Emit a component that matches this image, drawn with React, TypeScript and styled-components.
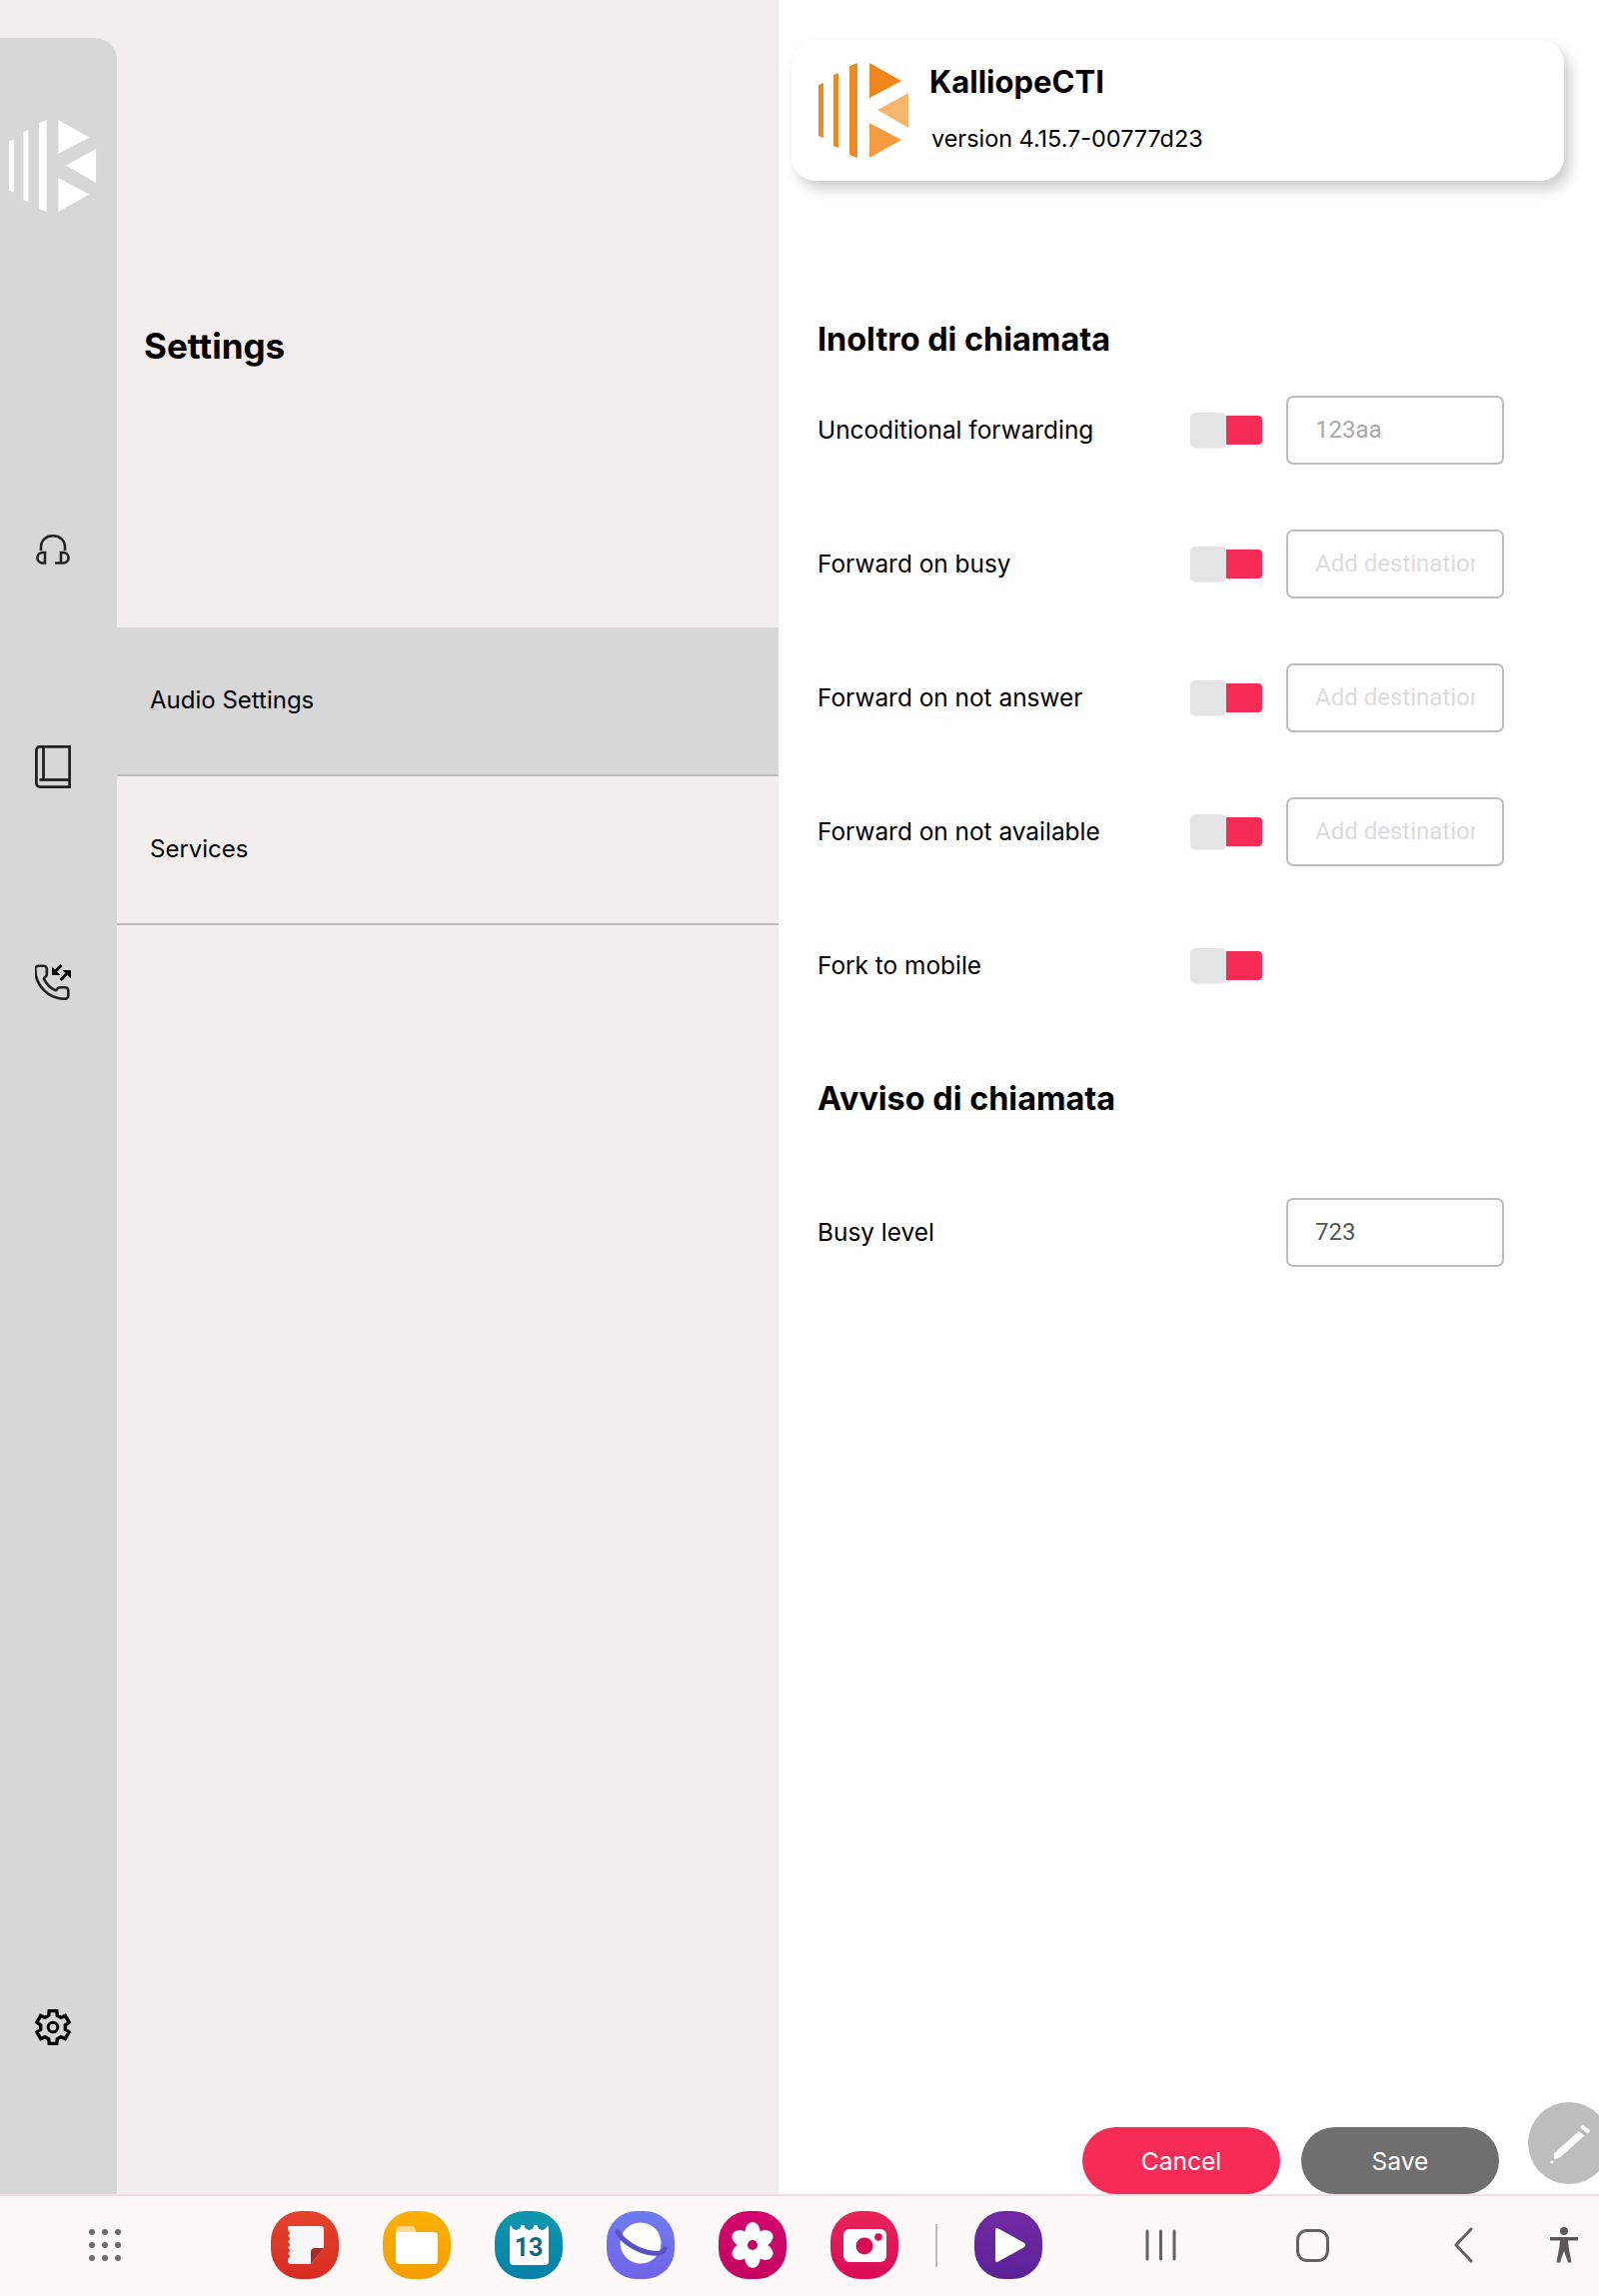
import styled, { createGlobalStyle } from 'styled-components';

const GlobalStyle = createGlobalStyle`
  html, body { margin: 0; padding: 0; background: #fff; }
  * { box-sizing: border-box; }
  body { font-family: "Inter", "Open Sans", sans-serif; color: #000; }
`;

const forwards = [
  { label: 'Uncoditional forwarding', value: '123aa' },
  { label: 'Forward on busy' },
  { label: 'Forward on not answer' },
  { label: 'Forward on not available' },
];

// six flat teeth, one pointing straight up
const gearPoints = Array.from({ length: 6 })
  .flatMap((_, k) => {
    const a = k * 60 - 90;
    return [[12.5, a - 20], [16.8, a - 13], [16.8, a + 13], [12.5, a + 20]];
  })
  .map(([r, deg]) => {
    const rad = (deg * Math.PI) / 180;
    return `${(19 + r * Math.cos(rad)).toFixed(2)},${(19 + r * Math.sin(rad)).toFixed(2)}`;
  })
  .join(' ');

const KLogo = ({ light }: { light?: boolean }) => {
  const bars = light ? '#fff' : '#ee8a26';
  return (
    <svg width={light ? 88 : 91} height={light ? 92 : 95} viewBox="0 0 91 95">
      <polygon fill={bars} points="0,22 5,20 5,75 0,73" />
      <polygon fill={bars} points="15,12 20,10 20,85 15,83" />
      <polygon fill={bars} points="31,3 39,0 39,95 31,92" />
      <polygon fill={light ? '#fff' : '#ef861c'} points="51,0 83,18 51,35" />
      <polygon fill={light ? '#fff' : '#f7b66c'} points="90,30 59,47 90,65" />
      <polygon fill={light ? '#fff' : '#f49c3f'} points="51,60 83,77 51,95" />
    </svg>
  );
};

const HeadsetIcon = () => (
  <svg width="36" height="30" viewBox="0 0 36 30" fill="none" stroke="#222" strokeWidth="2.6">
    <path d="M6 16V13C6 5.5 11 1.3 18 1.3S30 5.5 30 13V16" />
    <path d="M10 18V28.5H7A5.3 5.3 0 0 1 7 18Z" />
    <path d="M20 28.5H29A5.3 5.3 0 0 0 29 18H26V28.5" />
  </svg>
);

const BookIcon = () => (
  <svg width="36" height="43" viewBox="0 0 36 43" fill="none" stroke="#222" strokeWidth="2.8">
    <path d="M5 1.4H34.6V41.6H5A3.6 3.6 0 0 1 1.4 38V5A3.6 3.6 0 0 1 5 1.4Z" />
    <path d="M8.5 1.4V34.5" />
    <path d="M4.5 34.5H34.6" />
  </svg>
);

const PhoneSwapIcon = () => (
  <svg width="36" height="36" viewBox="0 0 36 36" fill="none">
    <g transform="translate(-3 -1.5) scale(1.65)" stroke="#222" strokeWidth="1.6" strokeLinecap="round" strokeLinejoin="round">
      <path d="M13.832 16.568a1 1 0 0 0 1.213-.303l.355-.465A2 2 0 0 1 17 15h3a2 2 0 0 1 2 2v3a2 2 0 0 1-2 2A18 18 0 0 1 2 4a2 2 0 0 1 2-2h3a2 2 0 0 1 2 2v3a2 2 0 0 1-.8 1.6l-.468.351a1 1 0 0 0-.292 1.233 14 14 0 0 0 6.392 6.384" />
    </g>
    <path d="M26.5 1L20 7.5" stroke="#000" strokeWidth="3" />
    <polygon fill="#000" points="17,2.5 17,11 25.5,11 22.5,8 20,8 20,5.5" />
    <path d="M25.5 16L32.5 9" stroke="#000" strokeWidth="3" />
    <polygon fill="#000" points="36,6 27.5,6 30.5,9 33,9 33,11.5 36,14.5" />
  </svg>
);

const GearIcon = () => (
  <svg width="38" height="38" viewBox="0 0 38 38" fill="none" stroke="#000" strokeWidth="3.4" strokeLinejoin="miter">
    <polygon points={gearPoints} />
    <circle cx="19" cy="19" r="4.8" strokeWidth="3" />
  </svg>
);

function App() {
  return (
    <Page>
      <GlobalStyle />
      <Main>
        <Rail>
          <RailLogo><KLogo light /></RailLogo>
          <RailNav>
            <RailItem $h={214}><HeadsetIcon /></RailItem>
            <RailItem $h={220}><BookIcon /></RailItem>
            <RailItem $h={212}><PhoneSwapIcon /></RailItem>
          </RailNav>
          <RailFooter><GearIcon /></RailFooter>
        </Rail>

        <MenuPane>
          <PaneTitle>Settings</PaneTitle>
          <MenuItem $active>Audio Settings</MenuItem>
          <MenuItem>Services</MenuItem>
        </MenuPane>

        <DetailPane>
          <AboutCard>
            <KLogo />
            <AboutText>
              <AppName>KalliopeCTI</AppName>
              <AppVersion>version 4.15.7-00777d23</AppVersion>
            </AboutText>
          </AboutCard>

          <SectionTitle>Inoltro di chiamata</SectionTitle>
          {forwards.map(f => (
            <Row key={f.label}>
              <RowLabel>{f.label}</RowLabel>
              <Toggle><Thumb /><Track /></Toggle>
              <Field readOnly defaultValue={f.value} placeholder="Add destination" />
            </Row>
          ))}
          <Row>
            <RowLabel>Fork to mobile</RowLabel>
            <Toggle><Thumb /><Track /></Toggle>
          </Row>

          <WaitTitle>Avviso di chiamata</WaitTitle>
          <Row>
            <RowLabel>Busy level</RowLabel>
            <ToggleGap />
            <Field $dark readOnly defaultValue="723" />
          </Row>

          <Actions>
            <ActionButton $color="#f72c56">Cancel</ActionButton>
            <ActionButton $color="#6f6f6f">Save</ActionButton>
          </Actions>
          <EditFab>
            <svg width="82" height="82" viewBox="0 0 82 82" fill="#fff">
              <polygon points="50.7,29 56.4,33.4 32.4,55 26,57.5 25.7,51.7" />
              <circle cx="24" cy="60" r="1.6" />
              <path d="M54.5 25L59.8 29" stroke="#fff" strokeWidth="4" strokeLinecap="round" />
            </svg>
          </EditFab>
        </DetailPane>
      </Main>

      <BottomBar>
        <Launcher>
          {Array.from({ length: 9 }).map((_, i) => <LauncherDot key={i} />)}
        </Launcher>
        <Apps>
          <AppIcon $bg="linear-gradient(#e5432a,#d82b22)">
            <svg width="38" height="38" viewBox="0 0 38 38">
              <path fill="#f6f6f8" d="M3 0H35Q38 0 38 3V22L25 38H5Q2 38 2 35V33Q6 30.500 2 27.500Q6 25 2 21.500Q6 19 2 15.500Q6 13 2 9.500Q6 7 2 4V2Q2 0 3 0Z" />
              <path fill="#a92a22" d="M25 38V26Q25 22 29 22H38Z" />
            </svg>
          </AppIcon>
          <AppIcon $bg="linear-gradient(#fbb200,#f69d00)">
            <svg width="42" height="38" viewBox="0 0 42 38">
              <path fill="#ffd98f" d="M0 5Q0 0 5 0H15Q20 0 20 6V10H0Z" />
              <rect fill="#fff" y="6" width="42" height="32" rx="4" />
            </svg>
          </AppIcon>
          <AppIcon $bg="linear-gradient(#0f97ac,#0581a8)">
            <CalendarSheet>13</CalendarSheet>
          </AppIcon>
          <AppIcon $bg="linear-gradient(#6f7cf0,#7263ea)">
            <svg width="68" height="68" viewBox="0 0 68 68" fill="none">
              <circle fill="#fff" cx="34" cy="32" r="20.500" />
              <path stroke="#5a50c8" strokeWidth="5" strokeLinecap="round" d="M11 21C16 30 30 40 45 42C52 43 57 42 58 38" />
            </svg>
          </AppIcon>
          <AppIcon $bg="linear-gradient(#d4056f,#c4045f)">
            <svg width="42" height="46" viewBox="0 0 46 50" fill="#fff" preserveAspectRatio="none">
              <ellipse cx="23" cy="11.500" rx="8.500" ry="11.500" />
              <ellipse cx="23" cy="38.500" rx="8.500" ry="11.500" />
              <ellipse cx="11" cy="18" rx="11" ry="8.500" transform="rotate(30 11 18)" />
              <ellipse cx="35" cy="18" rx="11" ry="8.500" transform="rotate(-30 35 18)" />
              <ellipse cx="11" cy="32" rx="11" ry="8.500" transform="rotate(-30 11 32)" />
              <ellipse cx="35" cy="32" rx="11" ry="8.500" transform="rotate(30 35 32)" />
              <circle cx="23" cy="25" r="5.500" fill="#c4045f" />
            </svg>
          </AppIcon>
          <AppIcon $bg="linear-gradient(#e8245a,#d90a58)">
            <svg width="43" height="33" viewBox="0 0 43 33">
              <rect fill="#fff" width="43" height="33" rx="6" />
              <circle fill="#d90a58" cx="21" cy="17" r="8.500" />
              <circle fill="#d90a58" cx="35" cy="8" r="3.800" />
            </svg>
          </AppIcon>
          <DockDivider />
          <AppIcon $bg="linear-gradient(#7229a4,#5a2298)">
            <svg width="36" height="36" viewBox="0 0 36 36">
              <path fill="#fff" d="M5 3Q5 0 8 1.500L34 16Q36 18 34 20L8 34.500Q5 36 5 33Z" />
            </svg>
          </AppIcon>
        </Apps>
        <SystemNav>
          <NavKey $ml={0}>
            <svg width="31" height="32" viewBox="0 0 31 32" stroke="#636363" strokeWidth="3" strokeLinecap="round">
              <path d="M2 2V30M15.500 2V30M29 2V30" />
            </svg>
          </NavKey>
          <NavKey $ml={120}><HomeKey /></NavKey>
          <NavKey $ml={124}>
            <svg width="20" height="36" viewBox="0 0 20 36" fill="none" stroke="#636363" strokeWidth="3" strokeLinecap="round" strokeLinejoin="round">
              <path d="M18 2L3 18L18 34" />
            </svg>
          </NavKey>
          <NavKey $ml={76}>
            <svg width="30" height="36" viewBox="0 0 30 36" fill="#595959">
              <circle cx="15" cy="4" r="4" />
              <path d="M1 10H29V13.500H19L20 22L22.500 35.500H19L15 24L11 35.500H7.500L10 22L11 13.500H1Z" />
            </svg>
          </NavKey>
        </SystemNav>
      </BottomBar>
    </Page>
  );
}

export default App;

const Page = styled.div`
  width: 1600px;
  height: 2298px;
  display: flex;
  flex-direction: column;
  overflow: hidden;
`;

const Main = styled.div`
  flex: 1;
  display: flex;
  min-height: 0;
  background: #f1eeed;
`;

const Rail = styled.aside`
  width: 117px;
  margin-top: 38px;
  padding-right: 11px;
  background: #d7d7d7;
  border-top-right-radius: 22px;
  display: flex;
  flex-direction: column;
  align-items: center;
`;

const RailLogo = styled.div`
  margin: 82px 0 0 0;
  height: 92px;
`;

const RailNav = styled.nav`
  margin-top: 231px;
  display: flex;
  flex-direction: column;
  align-items: center;
`;

const RailItem = styled.div<{ $h: number }>`
  height: ${p => p.$h}px;
  display: flex;
  align-items: center;
  justify-content: center;
`;

const RailFooter = styled.div`
  margin-top: auto;
  margin-bottom: 148px;
  display: flex;
`;

const MenuPane = styled.section`
  width: 662px;
  display: flex;
  flex-direction: column;
`;

const PaneTitle = styled.h1`
  margin: 326px 0 262px;
  padding-left: 27px;
  font-size: 35px;
  line-height: 40px;
  font-weight: 700;
`;

const MenuItem = styled.div<{ $active?: boolean }>`
  height: 149px;
  padding: 0 0 3px 33px;
  display: flex;
  align-items: center;
  font-size: 24px;
  background: ${p => (p.$active ? '#d7d7d7' : 'transparent')};
  border-bottom: 2px solid #bcbcbc;
`;

const DetailPane = styled.section`
  position: relative;
  flex: 1;
  background: #fff;
  padding-top: 40px;
  display: flex;
  flex-direction: column;
`;

const AboutCard = styled.div`
  margin-left: 13px;
  width: 773px;
  height: 141px;
  padding-left: 27px;
  display: flex;
  align-items: center;
  gap: 20px;
  background: #fff;
  border-radius: 24px;
  box-shadow: 6px 8px 14px rgba(0, 0, 0, 0.2);
`;

const AboutText = styled.div`
  display: flex;
  flex-direction: column;
  gap: 21px;
`;

const AppName = styled.div`
  font-size: 31px;
  line-height: 36px;
  font-weight: 700;
`;

const AppVersion = styled.div`
  font-size: 23.400px;
  line-height: 36px;
  padding-left: 2px;
`;

const SectionTitle = styled.h2`
  margin: 139px 0 3px;
  padding-left: 39px;
  font-size: 32.400px;
  line-height: 40px;
  font-weight: 700;
`;

const WaitTitle = styled(SectionTitle)`
  margin: 47px 0 46px;
`;

const Row = styled.div`
  height: 134px;
  padding-left: 39px;
  display: flex;
  align-items: center;
`;

const RowLabel = styled.div`
  width: 373px;
  font-size: 24.400px;
`;

const Toggle = styled.div`
  width: 72px;
  height: 35px;
  margin-right: 24px;
  display: flex;
  align-items: center;
`;

const ToggleGap = styled.div`
  width: 96px;
`;

const Thumb = styled.div`
  width: 36px;
  height: 35px;
  background: #e4e4e4;
  border-radius: 5px;
  box-shadow: 0 1px 2px rgba(0, 0, 0, 0.08);
`;

const Track = styled.div`
  width: 36px;
  height: 29px;
  background: #f72c56;
  border-radius: 0 4px 4px 0;
`;

const Field = styled.input<{ $dark?: boolean }>`
  width: 218px;
  height: 69px;
  padding: 0 27px;
  border: 2px solid #bdbdbd;
  border-radius: 7px;
  outline: none;
  background: #fff;
  font-family: "Roboto", sans-serif;
  font-size: 24px;
  color: ${p => (p.$dark ? '#555' : '#a9a9a9')};

  &::placeholder {
    color: #dcdcdc;
    opacity: 1;
  }
`;

const Actions = styled.div`
  margin-top: auto;
  padding-right: 100px;
  display: flex;
  justify-content: flex-end;
  gap: 21px;
`;

const ActionButton = styled.button<{ $color: string }>`
  width: 198px;
  height: 67px;
  border: none;
  border-radius: 34px;
  background: ${p => p.$color};
  color: #fff;
  font-family: inherit;
  font-size: 24.600px;
`;

const EditFab = styled.div`
  position: absolute;
  right: -11px;
  bottom: 10px;
  width: 82px;
  height: 82px;
  border-radius: 50%;
  background: #bdbdbd;
`;

const BottomBar = styled.footer`
  height: 102px;
  padding: 0 0 2px 89px;
  display: flex;
  align-items: center;
  background: #fdf9f9;
  border-top: 2px solid #f6dfe4;
`;

const Launcher = styled.div`
  width: 32px;
  height: 32px;
  display: grid;
  grid-template-columns: repeat(3, 6px);
  grid-template-rows: repeat(3, 6px);
  justify-content: space-between;
  align-content: space-between;
`;

const LauncherDot = styled.span`
  border-radius: 50%;
  background: #6d6a6a;
`;

const Apps = styled.div`
  margin-left: 150px;
  display: flex;
  align-items: center;
  gap: 44px;
`;

const AppIcon = styled.div<{ $bg: string }>`
  width: 68px;
  height: 68px;
  display: flex;
  align-items: center;
  justify-content: center;
  border-radius: 44%;
  background: ${p => p.$bg};
`;

const DockDivider = styled.div`
  width: 2px;
  height: 43px;
  margin: 0 -7px;
  background: #bcbcbc;
`;

const CalendarSheet = styled.div`
  width: 39px;
  height: 40px;
  padding-top: 8px;
  border-radius: 4px;
  background: radial-gradient(circle at 50% 0, #0c8fa9 4.500px, transparent 5px) 0 0 / 13px 8px repeat-x, #fff;
  text-align: center;
  font-family: "Roboto", sans-serif;
  font-size: 25px;
  line-height: 30px;
  font-weight: 700;
  color: #0b6a8a;
`;

const SystemNav = styled.div`
  margin-left: 103px;
  display: flex;
  align-items: center;
`;

const NavKey = styled.div<{ $ml: number }>`
  margin-left: ${p => p.$ml}px;
  display: flex;
`;

const HomeKey = styled.div`
  width: 33px;
  height: 33px;
  border: 3px solid #636363;
  border-radius: 11px;
`;
